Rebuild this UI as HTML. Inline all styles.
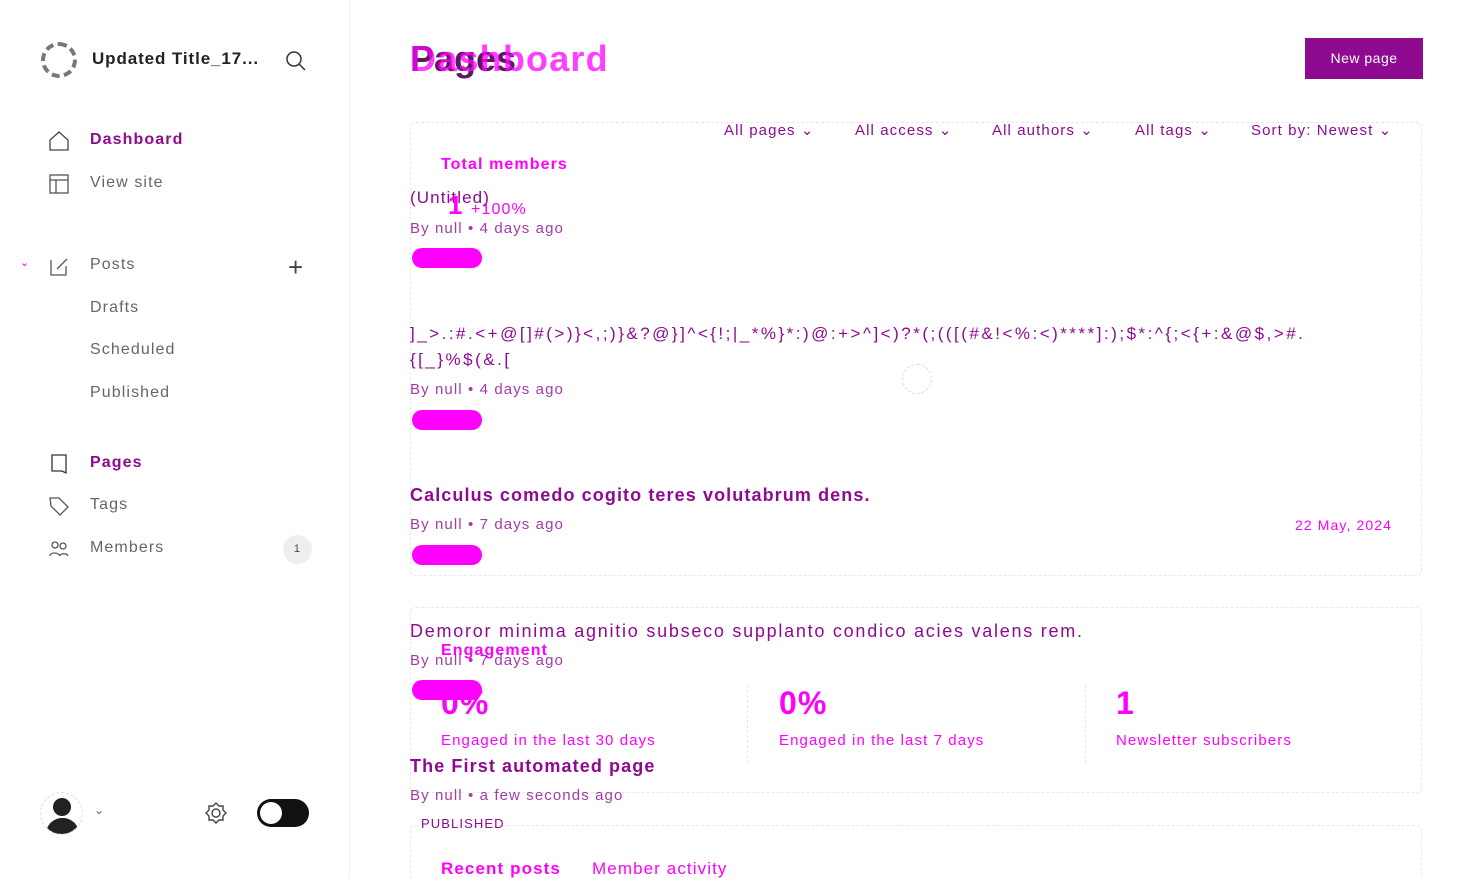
<!DOCTYPE html>
<html><head><meta charset="utf-8"><style>
*{margin:0;padding:0;box-sizing:border-box}
html,body{width:1483px;height:878px;overflow:hidden}
body{background:#fff;font-family:"Liberation Sans",sans-serif;position:relative;color:#444;letter-spacing:1.1px}
.a{position:absolute;white-space:nowrap}
.p{color:#8e0a90}.m{color:#f0f}.g{color:#666}
.side{position:absolute;left:0;top:0;width:350px;height:878px;border-right:1px solid #eee}
.pill{position:absolute;width:70px;height:20px;border-radius:10px;background:#f0f;}
.card{position:absolute;left:410px;right:61px;border:1px dashed #e8e8e8;border-radius:6px}
</style></head><body>
<div class="side">
<div class="a" style="left:41px;top:42px;width:36px;height:36px;border-radius:50%;border:4px dashed #777"></div>
<div class="a" style="left:92px;top:49px;font-size:17px;color:#222;font-weight:bold;letter-spacing:0.9px">Updated Title_17...</div>
<svg class="a" style="left:284px;top:49px" width="24" height="24" fill="none" stroke="#333" stroke-width="1.5"><circle cx="10" cy="10" r="7"/><path d="M15 15l6 6"/></svg>
<svg class="a" style="left:48px;top:130px" width="22" height="22" fill="none" stroke="#444" stroke-width="1.3"><path d="M2 10L11 2l9 8v10H2z"/></svg>
<div class="a p" style="left:90px;top:131px;font-size:16px;font-weight:bold">Dashboard</div>
<svg class="a" style="left:48px;top:173px" width="22" height="22" fill="none" stroke="#555" stroke-width="1.3"><rect x="2" y="2" width="18" height="18"/><path d="M2 7h18M8 7v13"/></svg>
<div class="a g" style="left:90px;top:174px;font-size:16px">View site</div>
<div class="a m" style="left:20px;top:256px;font-size:11px">⌄</div>
<svg class="a" style="left:48px;top:255px" width="22" height="22" fill="none" stroke="#555" stroke-width="1.3"><path d="M3 5v15h15V11M9 14l10-10"/></svg>
<div class="a g" style="left:90px;top:256px;font-size:16px">Posts</div>
<div class="a" style="left:288px;top:252px;font-size:26px;color:#444;font-weight:300">+</div>
<div class="a g" style="left:90px;top:299px;font-size:16px">Drafts</div>
<div class="a g" style="left:90px;top:341px;font-size:16px">Scheduled</div>
<div class="a g" style="left:90px;top:384px;font-size:16px">Published</div>
<svg class="a" style="left:48px;top:453px" width="22" height="22" fill="none" stroke="#333" stroke-width="1.3"><path d="M4 2h14v18l-4-2H4z"/></svg>
<div class="a p" style="left:90px;top:454px;font-size:16px;font-weight:bold">Pages</div>
<svg class="a" style="left:48px;top:495px" width="22" height="22" fill="none" stroke="#555" stroke-width="1.3"><path d="M2 3h9l9 9-8 8-9-9z"/></svg>
<div class="a g" style="left:90px;top:496px;font-size:16px">Tags</div>
<svg class="a" style="left:48px;top:538px" width="22" height="22" fill="none" stroke="#555" stroke-width="1.3"><circle cx="7" cy="7" r="3"/><circle cx="15" cy="8" r="3"/><path d="M2 18c0-4 8-4 10 0M12 18c0-3 7-3 8 0"/></svg>
<div class="a g" style="left:90px;top:539px;font-size:16px">Members</div>
<div class="a" style="left:283px;top:535px;width:29px;height:29px;border-radius:50%;background:#eee;font-size:11px;text-align:center;line-height:29px">1</div>
<div class="a" style="left:40px;top:792px;width:43px;height:43px;border-radius:50%;border:1px dashed #ddd;overflow:hidden">
<div style="position:absolute;left:12px;top:5px;width:18px;height:18px;border-radius:50%;background:#222"></div>
<div style="position:absolute;left:5px;top:25px;width:33px;height:22px;border-radius:16px 16px 0 0;background:#222"></div></div>
<div class="a" style="left:94px;top:803px;font-size:12px;color:#666">⌄</div>
<svg class="a" style="left:204px;top:801px" width="24" height="24" fill="none" stroke="#444" stroke-width="1.4"><circle cx="12" cy="12" r="4"/><path d="M12 2l3 3 4 0 0 4 3 3-3 3 0 4-4 0-3 3-3-3-4 0 0-4-3-3 3-3 0-4 4 0z"/></svg>
<div class="a" style="left:257px;top:799px;width:52px;height:28px;border-radius:14px;background:#111"><div style="position:absolute;left:3px;top:3px;width:22px;height:22px;border-radius:50%;background:#fff"></div></div>
</div>

<div class="a" style="left:410px;top:38px;font-size:36px;font-weight:bold;color:#5a1a5c;letter-spacing:0px">Pages</div>
<div class="a" style="left:410px;top:38px;font-size:36px;font-weight:bold;color:#f0f;letter-spacing:1.2px;opacity:.75">Dashboard</div>
<div class="a" style="left:1305px;top:38px;width:118px;height:41px;background:#8e0a90;color:#fff;font-size:14px;text-align:center;line-height:41px;letter-spacing:0.5px">New page</div>

<div class="card" style="top:122px;height:454px"></div>
<div class="card" style="top:607px;height:186px"></div>
<div class="card" style="top:825px;height:80px"></div>

<div class="a p" style="left:724px;top:121px;font-size:15px">All pages ⌄</div>
<div class="a p" style="left:855px;top:121px;font-size:15px">All access ⌄</div>
<div class="a p" style="left:992px;top:121px;font-size:15px">All authors ⌄</div>
<div class="a p" style="left:1135px;top:121px;font-size:15px">All tags ⌄</div>
<div class="a p" style="left:1251px;top:121px;font-size:15px">Sort by: Newest ⌄</div>

<div class="a m" style="left:441px;top:156px;font-size:16px;font-weight:bold">Total members</div>
<div class="a p" style="left:410px;top:188px;font-size:17px">(Untitled)</div>
<div class="a m" style="left:448px;top:190px;font-size:26px;font-weight:bold">1</div>
<div class="a m" style="left:471px;top:201px;font-size:16px">+100%</div>
<div class="a p" style="left:410px;top:220px;font-size:15px;opacity:.8">By null • 4 days ago</div>
<div class="pill" style="left:412px;top:248px"></div>

<div class="a p" style="left:410px;top:324px;font-size:17px;letter-spacing:2.5px">]_&gt;.:#.&lt;+@[]#(&gt;)}&lt;,;)}&amp;?@}]^&lt;{!;|_*%}*:)@:+&gt;^]&lt;)?*(;(([(#&amp;!&lt;%:&lt;)****]:);$*:^{;&lt;{+:&amp;@$,&gt;#.</div>
<div class="a p" style="left:410px;top:350px;font-size:17px;letter-spacing:2.5px">{[_}%$(&amp;.[</div>
<div class="a" style="left:902px;top:364px;width:30px;height:30px;border-radius:50%;border:1px dashed #ddd"></div>
<div class="a p" style="left:410px;top:381px;font-size:15px;opacity:.8">By null • 4 days ago</div>
<div class="pill" style="left:412px;top:410px"></div>

<div class="a p" style="left:410px;top:485px;font-size:18px;font-weight:bold;letter-spacing:1.1px">Calculus comedo cogito teres volutabrum dens.</div>
<div class="a p" style="left:410px;top:516px;font-size:15px;opacity:.8">By null • 7 days ago</div>
<div class="a m" style="left:1295px;top:517px;font-size:14px">22 May, 2024</div>
<div class="pill" style="left:412px;top:545px"></div>

<div class="a p" style="left:410px;top:621px;font-size:18px;letter-spacing:1.75px">Demoror minima agnitio subseco supplanto condico acies valens rem.</div>
<div class="a m" style="left:441px;top:642px;font-size:16px;font-weight:bold">Engagement</div>
<div class="a p" style="left:410px;top:652px;font-size:15px;opacity:.8">By null • 7 days ago</div>
<div class="pill" style="left:412px;top:680px"></div>
<div class="a m" style="left:441px;top:685px;font-size:32px;font-weight:bold">0%</div>
<div class="a m" style="left:779px;top:685px;font-size:32px;font-weight:bold">0%</div>
<div class="a m" style="left:1116px;top:685px;font-size:32px;font-weight:bold">1</div>
<div class="a m" style="left:441px;top:732px;font-size:15px">Engaged in the last 30 days</div>
<div class="a m" style="left:779px;top:732px;font-size:15px">Engaged in the last 7 days</div>
<div class="a m" style="left:1116px;top:732px;font-size:15px">Newsletter subscribers</div>
<div class="a" style="left:747px;top:685px;height:78px;border-left:1px dashed #e5e5e5"></div>
<div class="a" style="left:1085px;top:685px;height:78px;border-left:1px dashed #e5e5e5"></div>
<div class="a p" style="left:410px;top:756px;font-size:18px;font-weight:bold">The First automated page</div>
<div class="a p" style="left:410px;top:787px;font-size:15px;opacity:.8">By null • a few seconds ago</div>
<div class="a p" style="left:421px;top:816px;font-size:13px">PUBLISHED</div>
<div class="a m" style="left:441px;top:859px;font-size:17px;font-weight:bold">Recent posts</div>
<div class="a m" style="left:592px;top:859px;font-size:17px">Member activity</div>
</body></html>
